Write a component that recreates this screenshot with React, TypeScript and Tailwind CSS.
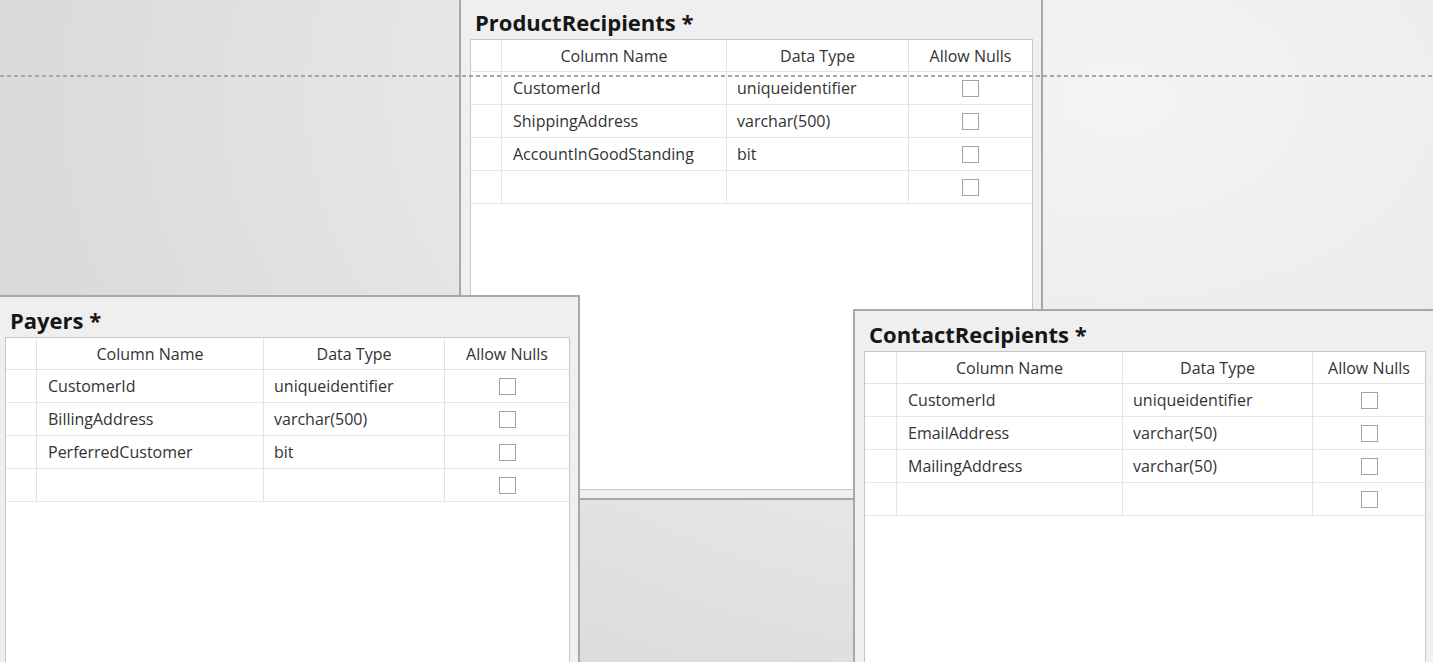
type Field = { name: string; type: string };

type TableWindowProps = {
  title: string;
  fields: Field[];
  frame: string;
  cols: string;
};

function Checkbox() {
  return <div className="w-[17px] h-[17px] border border-[#a2a2a2] bg-white" />;
}

function TableWindow({ title, fields, frame, cols }: TableWindowProps) {
  const rows: Field[] = [...fields, { name: "", type: "" }];

  return (
    <div
      className={`absolute flex flex-col border-2 border-[#a8a8a8] bg-[#efefef] pl-[9px] pr-[8px] pt-[9px] pb-[8px] ${frame}`}
    >
      <h2 className="h-[28px] leading-[28px] text-[22px] font-bold text-[#161616] pl-[5px] whitespace-nowrap">
        {title}
      </h2>
      <div className="mt-[3px] flex-1 border border-[#c6c6c6] bg-white text-[16px] text-[#333]">
        <div className={`grid h-[32px] border-b border-[#e2e2e2] ${cols}`}>
          <div className="border-r border-[#e4e4e4]" />
          <div className="flex items-center justify-center border-r border-[#e4e4e4]">
            Column Name
          </div>
          <div className="flex items-center justify-center border-r border-[#e4e4e4]">
            Data Type
          </div>
          <div className="flex items-center justify-center">Allow Nulls</div>
        </div>
        {rows.map((row, i) => (
          <div key={i} className={`grid h-[33px] border-b border-[#e8e8e8] ${cols}`}>
            <div className="border-r border-[#e4e4e4]" />
            <div className="flex items-center pl-[11px] border-r border-[#e4e4e4] whitespace-nowrap">
              {row.name}
            </div>
            <div className="flex items-center pl-[10px] border-r border-[#e4e4e4] whitespace-nowrap">
              {row.type}
            </div>
            <div className="flex items-center justify-center">
              <Checkbox />
            </div>
          </div>
        ))}
      </div>
    </div>
  );
}

export default function App() {
  return (
    <div
      className="relative w-[1433px] h-[662px] overflow-hidden bg-[radial-gradient(ellipse_1100px_700px_at_78%_15%,#f4f4f4_0%,#e9eaea_50%,#d9dbdb_100%)]"
      style={{ fontFamily: '"Open Sans", "Noto Sans", sans-serif' }}
    >
      <TableWindow
        title="ProductRecipients *"
        frame="left-[459px] top-[-3px] w-[584px] h-[503px]"
        cols="grid-cols-[31px_225px_182px_1fr]"
        fields={[
          { name: "CustomerId", type: "uniqueidentifier" },
          { name: "ShippingAddress", type: "varchar(500)" },
          { name: "AccountInGoodStanding", type: "bit" },
        ]}
      />
      <TableWindow
        title="Payers *"
        frame="left-[-6px] top-[295px] w-[586px] h-[420px]"
        cols="grid-cols-[31px_227px_181px_1fr]"
        fields={[
          { name: "CustomerId", type: "uniqueidentifier" },
          { name: "BillingAddress", type: "varchar(500)" },
          { name: "PerferredCustomer", type: "bit" },
        ]}
      />
      <TableWindow
        title="ContactRecipients *"
        frame="left-[853px] top-[309px] w-[583px] h-[420px]"
        cols="grid-cols-[32px_226px_190px_1fr]"
        fields={[
          { name: "CustomerId", type: "uniqueidentifier" },
          { name: "EmailAddress", type: "varchar(50)" },
          { name: "MailingAddress", type: "varchar(50)" },
        ]}
      />
      {/* guide line over the slide */}
      <div className="absolute left-0 top-[75px] w-full h-[2px] bg-[repeating-linear-gradient(90deg,#a6a6a6_0px,#a6a6a6_4px,transparent_4px,transparent_7px)]" />
    </div>
  );
}
